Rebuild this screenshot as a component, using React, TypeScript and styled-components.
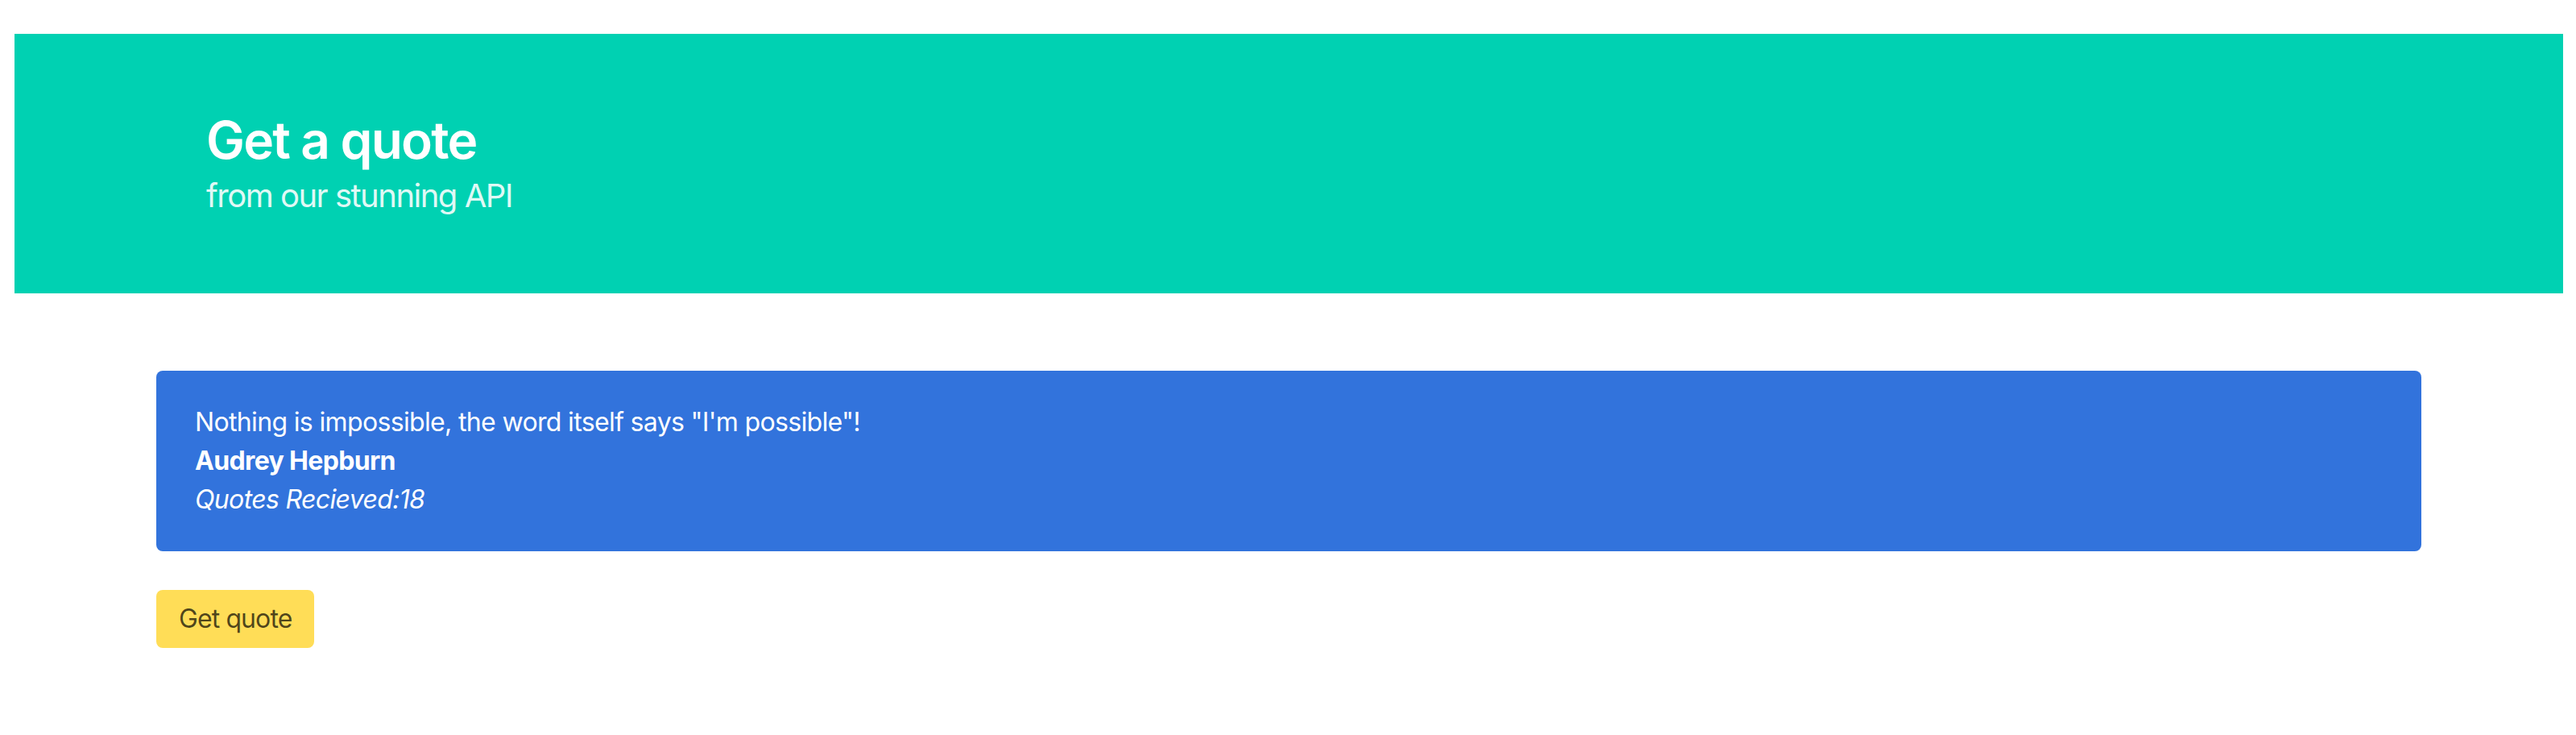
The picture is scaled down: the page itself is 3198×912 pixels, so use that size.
import React from "react";
import styled, { createGlobalStyle } from "styled-components";

const GlobalStyle = createGlobalStyle`
  html, body {
    margin: 0;
    padding: 0;
    background: #ffffff;
  }
  body {
    font-family: Inter, "Noto Sans", "Liberation Sans", sans-serif;
    font-size: 32px;
    line-height: 1.5;
    color: #4a4a4a;
    -webkit-font-smoothing: antialiased;
  }
  * { box-sizing: border-box; }
`;

const Page = styled.div`
  padding: 42px 16px 0 18px;
`;

const Hero = styled.section`
  background: #00d1b2;
  padding: 96px 48px;
`;

const Container = styled.div<{ $max: number }>`
  max-width: ${(p) => p.$max}px;
  margin: 0 auto;
`;

const Title = styled.h1`
  margin: 0 0 8px 0;
  font-size: 64px;
  line-height: 72px;
  font-weight: 600;
  letter-spacing: -1.8px;
  color: #ffffff;
`;

const Subtitle = styled.h2`
  margin: 0;
  font-size: 40px;
  line-height: 50px;
  font-weight: 400;
  letter-spacing: -1.5px;
  color: rgba(255, 255, 255, 0.9);
`;

const Section = styled.section`
  padding: 96px 48px;
`;

const Notification = styled.div`
  background: #3273dc;
  color: #ffffff;
  border-radius: 8px;
  padding: 40px 80px 40px 48px;
  margin-bottom: 48px;
`;

const Line = styled.div<{ $variant?: "bold" | "italic" }>`
  font-size: 32px;
  line-height: 48px;
  letter-spacing: -0.65px;
  font-weight: ${(p) => (p.$variant === "bold" ? 700 : 400)};
  font-style: ${(p) => (p.$variant === "italic" ? "italic" : "normal")};
`;

const Button = styled.button`
  display: inline-flex;
  align-items: center;
  justify-content: center;
  height: 72px;
  padding: 0 26px;
  border: 2px solid transparent;
  border-radius: 8px;
  background: #ffdd57;
  color: rgba(0, 0, 0, 0.7);
  font-family: inherit;
  font-size: 32px;
  line-height: 48px;
  letter-spacing: -0.9px;
  cursor: pointer;
`;

export default function App() {
  return (
    <Page>
      <GlobalStyle />
      <Hero>
        <Container $max={2688}>
          <Title>Get a quote</Title>
          <Subtitle>from our stunning API</Subtitle>
        </Container>
      </Hero>
      <Section>
        <Container $max={2812}>
          <Notification>
            <Line>Nothing is impossible, the word itself says "I'm possible"!</Line>
            <Line $variant="bold">Audrey Hepburn</Line>
            <Line $variant="italic">Quotes Recieved:18</Line>
          </Notification>
          <Button>Get quote</Button>
        </Container>
      </Section>
    </Page>
  );
}
